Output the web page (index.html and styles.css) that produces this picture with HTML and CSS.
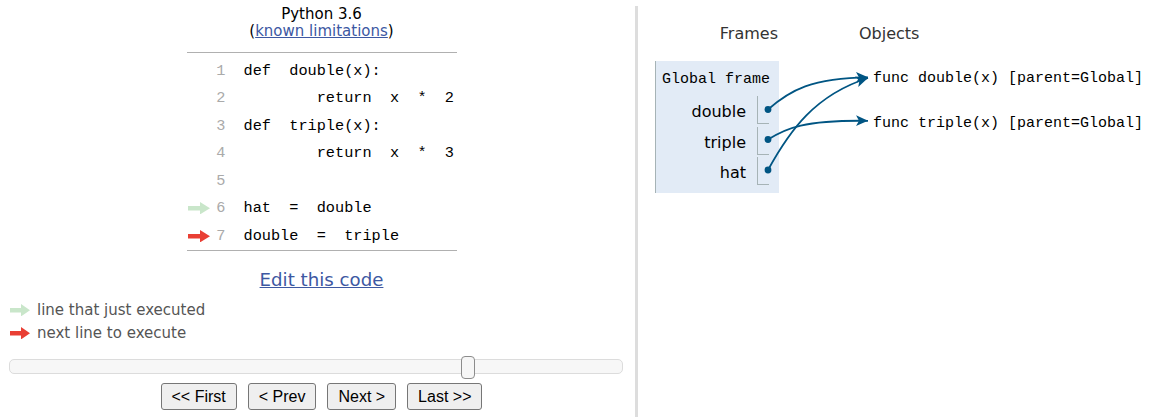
FILE: index.html
```html
<!DOCTYPE html>
<html>
<head>
<meta charset="utf-8">
<link rel="stylesheet" href="styles.css">
</head>
<body>
<div class="page">
  <div class="left">
    <div class="title">Python 3.6<br>(<a href="#" class="link">known limitations</a>)</div>
    <div class="code">
      <div class="row"><span class="gut"></span><span class="num">1</span><span class="src">def  double(x):</span></div>
      <div class="row"><span class="gut"></span><span class="num">2</span><span class="src">        return  x  *  2</span></div>
      <div class="row"><span class="gut"></span><span class="num">3</span><span class="src">def  triple(x):</span></div>
      <div class="row"><span class="gut"></span><span class="num">4</span><span class="src">        return  x  *  3</span></div>
      <div class="row"><span class="gut"></span><span class="num">5</span><span class="src"></span></div>
      <div class="row"><span class="gut"><svg class="garrow" width="22" height="12" viewBox="0 0 22 12"><rect x="0" y="4" width="13" height="4.5" fill="#c9e6ca"/><polygon points="12,0 22,6.2 12,12.4" fill="#c9e6ca"/></svg></span><span class="num">6</span><span class="src">hat  =  double</span></div>
      <div class="row"><span class="gut"><svg class="garrow" width="22" height="12" viewBox="0 0 22 12"><rect x="0" y="4" width="13" height="4.5" fill="#e93f34"/><polygon points="12,0 22,6.2 12,12.4" fill="#e93f34"/></svg></span><span class="num">7</span><span class="src">double  =  triple</span></div>
    </div>
    <div class="edit"><a href="#" class="link">Edit this code</a></div>
    <div class="legend">
      <div class="leg"><svg class="larrow" width="20" height="12" viewBox="0 0 20 12"><rect x="0" y="4" width="12" height="4.5" fill="#c9e6ca"/><polygon points="11,0 20,6.2 11,12.4" fill="#c9e6ca"/></svg><span>line that just executed</span></div>
      <div class="leg"><svg class="larrow" width="20" height="12" viewBox="0 0 20 12"><rect x="0" y="4" width="12" height="4.5" fill="#e93f34"/><polygon points="11,0 20,6.2 11,12.4" fill="#e93f34"/></svg><span>next line to execute</span></div>
    </div>
    <div class="slider"><div class="thumb"></div></div>
    <div class="buttons">
      <button class="btn">&lt;&lt; First</button>
      <button class="btn">&lt; Prev</button>
      <button class="btn">Next &gt;</button>
      <button class="btn">Last &gt;&gt;</button>
    </div>
  </div>
  <div class="right">
    <div class="frames">
      <div class="hdr">Frames</div>
      <div class="frame">
        <div class="fname">Global frame</div>
        <div class="vars">
          <div class="var"><span class="vname">double</span><span class="vval"></span></div>
          <div class="var"><span class="vname">triple</span><span class="vval"></span></div>
          <div class="var"><span class="vname">hat</span><span class="vval"></span></div>
        </div>
      </div>
    </div>
    <div class="objects">
      <div class="hdr">Objects</div>
      <div class="obj first">func double(x) [parent=Global]</div>
      <div class="obj">func triple(x) [parent=Global]</div>
    </div>
  </div>
  <svg class="arrows" width="1172" height="417" viewBox="0 0 1172 417">
    <defs>
      <marker id="ah" markerUnits="userSpaceOnUse" markerWidth="13" markerHeight="12" refX="12" refY="6" orient="auto">
        <path d="M0,0.5 L12,6 L0,11.5 L3,6 z" fill="#005583"/>
      </marker>
    </defs>
    <path d="M768,109.5 C790,90 812,78 868,77.3" stroke="#005583" stroke-width="1.8" fill="none" marker-end="url(#ah)"/>
    <path d="M768,139.5 C786,128 804,120 868,120.8" stroke="#005583" stroke-width="1.8" fill="none" marker-end="url(#ah)"/>
    <path d="M768,170 C790,130 815,95 868,78" stroke="#005583" stroke-width="1.8" fill="none" marker-end="url(#ah)"/>
    <circle cx="768" cy="109.5" r="3.4" fill="#005583"/>
    <circle cx="768" cy="139.5" r="3.4" fill="#005583"/>
    <circle cx="768" cy="170" r="3.4" fill="#005583"/>
  </svg>
</div>
</body>
</html>
```

FILE: styles.css
```css
html, body {
  margin: 0;
  padding: 0;
  background: #fff;
}
.page {
  position: relative;
  display: flex;
  width: 1172px;
  height: 417px;
  overflow: hidden;
  font-family: "DejaVu Sans", Verdana, sans-serif;
}
.left {
  margin-left: 8px;
  margin-top: 6px;
  width: 627px;
  border-right: 3px solid #ddd;
  display: flex;
  flex-direction: column;
  align-items: center;
}
.title {
  font-size: 15px;
  line-height: 17px;
  text-align: center;
  color: #000;
}
.link {
  color: #3d58a2;
  text-decoration: underline;
}
.code {
  margin-top: 12px;
  width: 270px;
  border-top: 1px solid #b0b0b0;
  border-bottom: 1px solid #b0b0b0;
  padding: 4px 0 0.5px 0;
  font-family: "Liberation Mono", "DejaVu Sans Mono", monospace;
  font-size: 15.25px;
}
.row {
  display: flex;
  align-items: center;
  height: 27.5px;
}
.gut {
  width: 26px;
  height: 12px;
  display: flex;
  align-items: center;
}
.garrow {
  display: block;
  margin-left: 1px;
}
.num {
  width: 13px;
  text-align: right;
  color: #aaa;
}
.src {
  padding-left: 18px;
  white-space: pre;
  color: #000;
}
.edit {
  margin-top: 19px;
  font-size: 18.2px;
  line-height: 20px;
}
.legend {
  margin-top: 8px;
  align-self: stretch;
  font-size: 15px;
  color: #555;
}
.leg {
  display: flex;
  align-items: center;
  height: 23px;
}
.larrow {
  display: block;
  margin-left: 2px;
  margin-right: 7px;
}
.slider {
  position: relative;
  align-self: flex-start;
  margin-top: 15px;
  margin-left: 1px;
  width: 612px;
  height: 13px;
  border: 1px solid #dcdcdc;
  border-radius: 5px;
  background: #f7f7f7;
}
.thumb {
  position: absolute;
  left: 451px;
  top: -4px;
  width: 12px;
  height: 21px;
  border: 1px solid #8c8c8c;
  border-radius: 4px;
  background: #f6f6f6;
}
.buttons {
  margin-top: 9px;
  display: flex;
  gap: 11px;
}
.btn {
  height: 27px;
  padding: 0 10px;
  font-family: "Liberation Sans", Arial, sans-serif;
  font-size: 16px;
  color: #000;
  background: #efefef;
  border: 1px solid #767676;
  border-radius: 3px;
}
.right {
  display: flex;
  padding-left: 17px;
  padding-top: 23.5px;
}
.hdr {
  font-size: 16px;
  line-height: 19px;
  color: #333;
}
.frames {
  width: 124px;
}
.frames .hdr {
  text-align: right;
  padding-right: 1px;
}
.frame {
  margin-top: 18.5px;
  background: #e2ebf6;
  border-left: 1px solid #a6b3b6;
  padding: 8.5px 10px 7.5px 0;
}
.fname {
  font-family: "Liberation Mono", "DejaVu Sans Mono", monospace;
  font-size: 15px;
  line-height: 20px;
  padding-left: 6px;
  white-space: nowrap;
}
.vars {
  margin-top: 6.5px;
  display: flex;
  flex-direction: column;
  gap: 2.5px;
}
.var {
  display: flex;
  height: 28px;
}
.vname {
  flex: 1;
  text-align: right;
  padding-right: 11px;
  padding-top: 3px;
  font-size: 16px;
  line-height: 25px;
  color: #000;
}
.vval {
  width: 11px;
  border-left: 1px solid #a6b3b6;
  border-bottom: 1px solid #a6b3b6;
}
.objects {
  margin-left: 80px;
}
.obj {
  font-family: "Liberation Mono", "DejaVu Sans Mono", monospace;
  font-size: 15px;
  line-height: 20px;
  padding-left: 14px;
  white-space: pre;
  margin-top: 25px;
  color: #000;
}
.obj.first {
  margin-top: 26.5px;
}
.arrows {
  position: absolute;
  left: 0;
  top: 0;
  pointer-events: none;
}
```
